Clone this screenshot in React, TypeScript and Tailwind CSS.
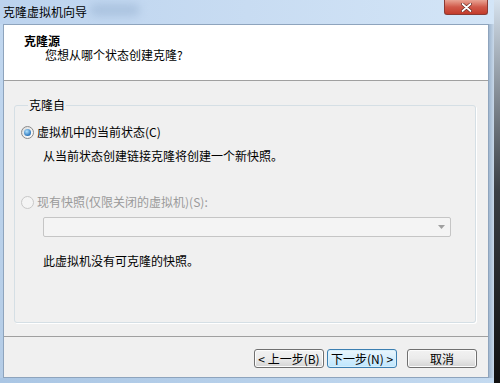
import React from 'react';

const font = { fontFamily: '"Noto Sans CJK SC", "Microsoft YaHei", sans-serif' };

const Radio: React.FC<{ checked?: boolean; disabled?: boolean }> = ({ checked, disabled }) => (
  <span
    className={`flex h-[13px] w-[13px] shrink-0 items-center justify-center rounded-full border ${
      disabled ? 'border-[#c8c8c8] bg-[#f4f4f4]' : 'border-[#8a8a8a] bg-linear-to-br from-[#dcdcdc] to-[#ffffff]'
    }`}
  >
    {checked && (
      <span className="h-[7px] w-[7px] rounded-full bg-[radial-gradient(circle_at_40%_35%,#b4e4ff,#2a76bd_70%,#1b4f86)]" />
    )}
  </span>
);

const Button: React.FC<{ label: string; primary?: boolean }> = ({ label, primary }) => (
  <button
    className={`flex h-[19px] w-[70px] items-center justify-center whitespace-pre rounded-[3px] border text-[12px] leading-none text-black ${
      primary
        ? 'border-[#3c7fb1] bg-linear-to-b from-[#eaf6fd] to-[#bee6fd] shadow-[inset_0_0_0_1px_#d9f0fc]'
        : 'border-[#707070] bg-linear-to-b from-[#f2f2f2] via-[#ebebeb] to-[#d4d4d4] shadow-[inset_0_0_0_1px_#fcfcfc]'
    }`}
  >
    {label}
  </button>
);

export default function App() {
  return (
    <div className="flex h-[383px] w-[500px] overflow-hidden bg-[#1a1a1a]" style={font}>
      <div className="flex w-[494px] flex-col bg-linear-to-b from-[#c2d8f0] to-[#b4cce6]">
        {/* title bar */}
        <div className="relative flex h-[24px] shrink-0 items-center bg-linear-to-r from-[#bcd3ee] via-[#c8dcf2] to-[#d3e5f7] pl-[3px]">
          <div className="absolute left-[90px] top-[4px] h-[12px] w-[50px] rounded-full bg-[#8aa6c8] opacity-40 blur-[4px]" />
          <span className="relative text-[12px] leading-none text-black">克隆虚拟机向导</span>
          <div className="absolute right-[6px] top-0 flex h-[15px] w-[44px] items-center justify-center rounded-b-[3px] border border-t-0 border-[#8a3a33] bg-linear-to-b from-[#e8a394] via-[#d0594a] to-[#c33b2a]">
            <svg width="11" height="9" viewBox="0 0 11 9">
              <path d="M1.5 1 L9.5 8 M9.5 1 L1.5 8" stroke="#5a1f18" strokeWidth="3" strokeLinecap="round" />
              <path d="M1.5 1 L9.5 8 M9.5 1 L1.5 8" stroke="#ffffff" strokeWidth="1.8" strokeLinecap="round" />
            </svg>
          </div>
        </div>

        {/* body */}
        <div className="flex flex-1">
          <div className="w-[3px] shrink-0" />
          <div className="flex w-[486px] flex-col border border-[#8ea4bd] bg-[#f0f0f0]">
            {/* header */}
            <div className="h-[56px] shrink-0 border-b border-[#a0a0a0] bg-white pl-[20px] pt-[9px] text-[12px] leading-[14px] text-black">
              <div className="font-bold">克隆源</div>
              <div className="pl-[21px]">您想从哪个状态创建克隆?</div>
            </div>

            {/* group box */}
            <fieldset className="ml-[10px] mt-[17px] h-[225px] w-[462px] rounded-[3px] border border-[#d5dfe5] pl-[6px] shadow-[1px_1px_0_#ffffff]">
              <legend className="ml-[7px] px-[1px] text-[12px] leading-[14px] text-black">克隆自</legend>
              <div className="mt-[13px] flex items-center gap-[3px] text-[12px] leading-[14px] text-black">
                <Radio checked />
                <span>虚拟机中的当前状态(C)</span>
              </div>
              <div className="mt-[10px] pl-[22px] text-[12px] leading-[14px] text-black">
                从当前状态创建链接克隆将创建一个新快照。
              </div>
              <div className="mt-[32px] flex items-center gap-[3px] text-[12px] leading-[14px] text-[#9a9a9a]">
                <Radio disabled />
                <span>现有快照(仅限关闭的虚拟机)(S):</span>
              </div>
              <div className="ml-[22px] mt-[8px] flex h-[20px] w-[408px] items-center justify-end rounded-[2px] border border-[#c5c5c5] bg-[#f4f4f4] pr-[5px]">
                <svg width="7" height="4" viewBox="0 0 7 4">
                  <path d="M0 0 L7 0 L3.5 4 Z" fill="#a0a0a0" />
                </svg>
              </div>
              <div className="mt-[17px] pl-[22px] text-[12px] leading-[14px] text-black">
                此虚拟机没有可克隆的快照。
              </div>
            </fieldset>

            {/* footer */}
            <div className="mt-[13px] border-t border-[#a0a0a0] shadow-[inset_0_1px_0_#ffffff]" />
            <div className="mt-[12px] flex items-center pl-[250px]">
              <Button label="< 上一步(B)" />
              <div className="w-[3px]" />
              <Button label="下一步(N) >" primary />
              <div className="w-[10px]" />
              <Button label="取消" />
            </div>
          </div>
          <div className="w-[5px] shrink-0 bg-linear-to-r from-[#9fb6cf] to-[#c9d9ea]" />
        </div>
        <div className="h-[5px] shrink-0 bg-linear-to-r from-[#aac6e4] to-[#c4daf0]" />
      </div>
      <div className="w-[6px] bg-linear-to-b from-[#d6e2ee] via-[#3a3f45] to-[#111111]" />
    </div>
  );
}
